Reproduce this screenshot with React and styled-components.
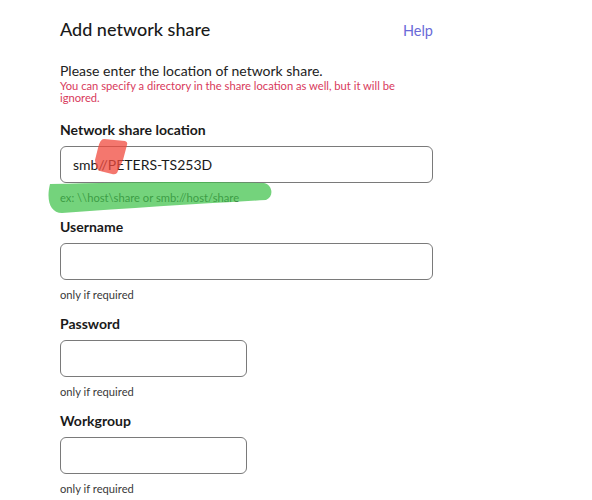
import React from "react";
import styled, { createGlobalStyle } from "styled-components";

const Global = createGlobalStyle`
  html, body { margin: 0; padding: 0; background: #fff; }
  body { font-family: Lato, "Open Sans", sans-serif; color: #1a1a1a; }
`;

const Page = styled.div`
  position: relative;
  width: 592px;
  height: 500px;
  overflow: hidden;
  padding: 17px 0 0 60px;
  box-sizing: border-box;
`;

const Content = styled.div`
  width: 373px;
  display: flex;
  flex-direction: column;
`;

const Header = styled.div`
  display: flex;
  justify-content: space-between;
  align-items: baseline;
`;

const Title = styled.h1`
  margin: 0;
  font-size: 18px;
  line-height: 24px;
  font-weight: 500;
  color: #1a1a1a;
`;

const HelpLink = styled.a`
  font-size: 14.5px;
  color: #6a6ad8;
  text-decoration: none;
`;

const Intro = styled.p`
  margin: 21px 0 0;
  font-size: 14px;
  line-height: 18px;
  color: #222;
`;

const Warning = styled.p`
  margin: 0;
  font-size: 11.2px;
  line-height: 12px;
  color: #d83a5c;
`;

const Field = styled.div`
  display: flex;
  flex-direction: column;
  margin-top: ${(p) => p.$top}px;
`;

const Label = styled.label`
  font-size: 14px;
  line-height: 20px;
  font-weight: 700;
  color: #1a1a1a;
`;

const Input = styled.input`
  box-sizing: border-box;
  margin-top: 6px;
  width: ${(p) => (p.$narrow ? "187px" : "100%")};
  height: 37px;
  border: 1px solid #7a7a7a;
  border-radius: 6px;
  padding: 0 12px;
  font-family: Lato, sans-serif;
  font-size: 14px;
  color: #1a1a1a;
  background: #fff;
  outline: none;
`;

const Hint = styled.div`
  margin-top: 8px;
  font-size: 11.2px;
  line-height: 14px;
  color: #3a3a3a;
`;

const Marks = styled.svg`
  position: absolute;
  left: 0;
  top: 0;
  pointer-events: none;
`;

export default function App() {
  return (
    <>
      <Global />
      <Page>
        <Content>
          <Header>
            <Title>Add network share</Title>
            <HelpLink href="#">Help</HelpLink>
          </Header>
          <Intro>Please enter the location of network share.</Intro>
          <Warning>
            You can specify a directory in the share location as well, but it will be ignored.
          </Warning>

          <Field $top={16}>
            <Label>Network share location</Label>
            <Input defaultValue="smb//PETERS-TS253D" />
            <Hint>ex: \\host\share or smb://host/share</Hint>
          </Field>

          <Field $top={12}>
            <Label>Username</Label>
            <Input />
            <Hint>only if required</Hint>
          </Field>

          <Field $top={12}>
            <Label>Password</Label>
            <Input $narrow type="password" />
            <Hint>only if required</Hint>
          </Field>

          <Field $top={12}>
            <Label>Workgroup</Label>
            <Input $narrow />
            <Hint>only if required</Hint>
          </Field>
        </Content>

        <Marks width="592" height="500" viewBox="0 0 592 500">
          <path
            d="M50 184 C120 182 200 181 264 183 C273 185 274 197 266 200 C200 204 130 208 62 213 C50 213 46 200 50 184 Z"
            fill="#3fc24a"
            fillOpacity="0.72"
          />
          <path
            d="M104 139 L125 141 Q128 142 127 145 L123 160 L117 173 Q115 175 112 174 L100 171 Q97 170 96 166 L95 160 L98 148 Q100 139 104 139 Z"
            fill="#f04a3e"
            fillOpacity="0.75"
          />
        </Marks>
      </Page>
    </>
  );
}
